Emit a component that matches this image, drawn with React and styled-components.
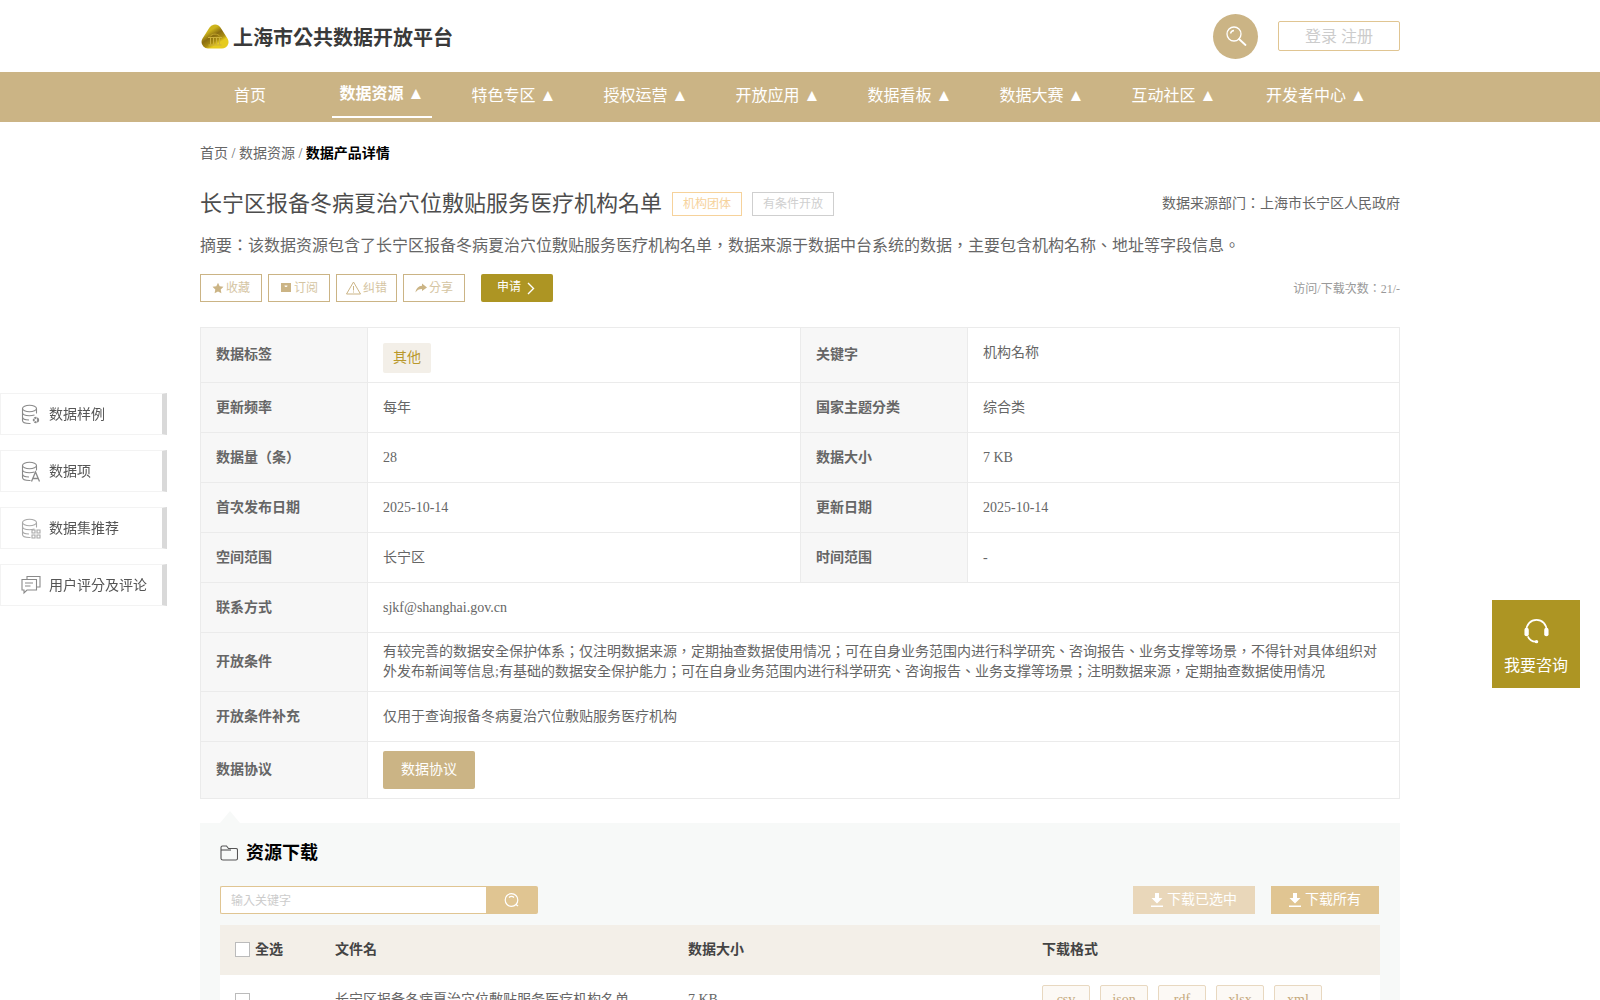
import React from 'react';
import styled, { createGlobalStyle } from 'styled-components';

const GlobalStyle = createGlobalStyle`
  html, body {
    margin: 0;
    padding: 0;
    background: #fff;
    overflow-x: hidden;
  }
  body {
    font-family: "Liberation Serif", "Noto Sans CJK TC", serif;
    font-size: 14px;
    line-height: 1.42857;
    color: #666;
  }
  * {
    box-sizing: border-box;
  }
`;

const NAV_ITEMS = [
  { label: '首页' },
  { label: '数据资源', arrow: true, active: true },
  { label: '特色专区', arrow: true },
  { label: '授权运营', arrow: true },
  { label: '开放应用', arrow: true },
  { label: '数据看板', arrow: true },
  { label: '数据大赛', arrow: true },
  { label: '互动社区', arrow: true },
  { label: '开发者中心', arrow: true },
];

const FORMATS = ['csv', 'json', 'rdf', 'xlsx', 'xml'];

const Logo = () => (
  <svg width="30" height="28" viewBox="0 0 30 28">
    <defs>
      <linearGradient id="gold" x1="0.1" y1="0" x2="0.9" y2="1">
        <stop offset="0" stopColor="#cdb41c" />
        <stop offset="0.4" stopColor="#8a6d10" />
        <stop offset="0.75" stopColor="#a98c12" />
        <stop offset="1" stopColor="#e6cb1e" />
      </linearGradient>
    </defs>
    <path d="M15 9L22 20H8z" fill="url(#gold)" stroke="url(#gold)" strokeWidth="13" strokeLinejoin="round" />
    <path d="M8 15.500h14M8.500 23h13M10.500 16v6.500M13.500 16v6.500M16.500 16v6.500M19.500 16v6.500" stroke="#cdb13c" strokeWidth="1" fill="none" />
    <path d="M10 14.500c2-3.200 8-3.200 10 0" stroke="#c4a62c" strokeWidth="1" fill="none" />
  </svg>
);

const SearchGlyph = () => (
  <svg width="22" height="22" viewBox="0 0 22 22" fill="none" stroke="#fff" strokeWidth="1.300">
    <circle cx="9" cy="9" r="7" />
    <path d="M5.500 8.500a4 4 0 0 1 3.500-3" />
    <path d="M14 14l6.500 6" strokeWidth="1.800" strokeLinecap="round" />
  </svg>
);

const SearchRound = () => (
  <svg width="16" height="16" viewBox="0 0 16 16" fill="none" stroke="#fff" strokeWidth="1.200">
    <circle cx="7.500" cy="8" r="6.300" />
    <path d="M5 5.500a3.500 3.500 0 0 1 5 0" />
    <path d="M12 12.500l2 1.500" strokeWidth="1.400" />
  </svg>
);

const Star = () => (
  <svg width="12" height="12" viewBox="0 0 24 24" fill="#cbb485">
    <path d="M12 1.500l3.300 7 7.700 1-5.600 5.300 1.400 7.700-6.800-3.700-6.800 3.700 1.400-7.700L1 9.500l7.700-1z" />
  </svg>
);

const Subscribe = () => (
  <svg width="12" height="12" viewBox="0 0 12 12">
    <path fill="#cbb485" d="M1 1h10v9H1zM4.500 3.500a1.500 1.500 0 0 0 3 0z" fillRule="evenodd" />
  </svg>
);

const Warning = () => (
  <svg width="15" height="14" viewBox="0 0 15 14" fill="none" stroke="#cbb485">
    <path d="M7.500 1L14.500 13H.5z" />
    <path d="M7.500 5v4.500M7.500 10.500v1" />
  </svg>
);

const Share = () => (
  <svg width="12" height="12" viewBox="0 0 12 12">
    <path fill="#cbb485" d="M7 1.500L12 5.500 7 9V7C4 7 2 8 .5 10.500 1 6.500 3.500 4 7 3.800z" />
  </svg>
);

const Chevron = () => (
  <svg width="9" height="13" viewBox="0 0 9 13" fill="none" stroke="#fff" strokeWidth="1.400">
    <path d="M2 1l5.500 5.500L2 12" />
  </svg>
);

const DbBody = () => (
  <>
    <ellipse cx="8.500" cy="4.500" rx="7" ry="3.200" />
    <path d="M1.500 4.500v12c0 1.800 3 3 7 3h1" />
    <path d="M15.500 4.500v5" />
    <path d="M1.500 8.500c0 1.800 3 3.200 7 3.200 2 0 3.500-.3 5-.8M1.500 13c0 1.800 3 3 6.500 3" />
  </>
);

const DbGear = () => (
  <svg width="20" height="21" viewBox="0 0 20 21" fill="none" stroke="#8a8a8a" strokeWidth="1.100">
    <DbBody />
    <circle cx="15" cy="16" r="2.200" strokeWidth="2" strokeDasharray="2 .6" />
  </svg>
);

const DbLetter = () => (
  <svg width="20" height="21" viewBox="0 0 20 21" fill="none" stroke="#8a8a8a" strokeWidth="1.100">
    <DbBody />
    <path d="M10.500 20.500L14.500 11l4 9.500M12 17.500h5" strokeWidth="1.300" />
  </svg>
);

const DbGrid = () => (
  <svg width="20" height="21" viewBox="0 0 20 21" fill="none" stroke="#a8a8a8" strokeWidth="1.100">
    <DbBody />
    <path d="M11 12h3v3h-3zM16 12h3v3h-3zM11 17h3v3h-3zM16 17h3v3h-3z" />
  </svg>
);

const Comment = () => (
  <svg width="20" height="20" viewBox="0 0 20 20" fill="none" stroke="#8a8a8a" strokeWidth="1.100">
    <path d="M6 4V1.500h13V12h-3" />
    <path d="M1 4.500h14.500v10.500H6l-3 3v-3H1z" />
    <path d="M4 8h8M4 11h5.500" />
  </svg>
);

const Folder = () => (
  <svg width="18" height="16" viewBox="0 0 18 16" fill="none" stroke="#555" strokeWidth="1.100">
    <path d="M1 13.500V2.500C1 1.500 1.500 1 2.500 1h4l2 2.500h7.500c1 0 1.500.5 1.500 1.500v8.500c0 1-.5 1.500-1.500 1.500h-13C1.500 15 1 14.500 1 13.500z" />
    <path d="M1 5h10" />
  </svg>
);

const DownloadGlyph = () => (
  <svg width="12" height="14" viewBox="0 0 12 14" fill="#fff">
    <path d="M4 0h4v5h3.500L6 10.500.5 5H4z" />
    <path d="M0 12.500h12V14H0z" />
  </svg>
);

const Headset = () => (
  <svg width="27" height="27" viewBox="0 0 28 28" fill="none" stroke="#fff" strokeWidth="1.800">
    <path d="M3.500 13C3.500 6.500 8 2 14 2s10.500 4.500 10.500 11" />
    <path d="M5 19c1.500 3.500 4.500 5.500 8 5.500" />
    <rect x="1.500" y="10" width="4.500" height="9" rx="2.200" fill="#fff" stroke="none" />
    <rect x="22" y="10" width="4.500" height="9" rx="2.200" fill="#fff" stroke="none" />
    <circle cx="14" cy="24.500" r="1.800" fill="#fff" stroke="none" />
  </svg>
);

const SIDE_ITEMS = [
  { label: '数据样例', icon: <DbGear /> },
  { label: '数据项', icon: <DbLetter /> },
  { label: '数据集推荐', icon: <DbGrid /> },
  { label: '用户评分及评论', icon: <Comment /> },
];

const ACTIONS = [
  { label: '收藏', icon: <Star />, width: 62 },
  { label: '订阅', icon: <Subscribe />, width: 62 },
  { label: '纠错', icon: <Warning />, width: 61 },
  { label: '分享', icon: <Share />, width: 62 },
];

export default function App() {
  return (
    <Page>
      <GlobalStyle />
      <Header>
        <HeaderInner>
          <Brand>
            <Logo />
            <BrandName>上海市公共数据开放平台</BrandName>
          </Brand>
          <HeaderRight>
            <SearchCircle>
              <SearchGlyph />
            </SearchCircle>
            <LoginBox>登录 注册</LoginBox>
          </HeaderRight>
        </HeaderInner>
      </Header>

      <NavBar>
        <NavInner>
          {NAV_ITEMS.map(item => (
            <NavItem key={item.label} $active={item.active}>
              {item.label}
              {item.arrow && ' '}
              {item.arrow && <NavArrow>▲</NavArrow>}
            </NavItem>
          ))}
        </NavInner>
      </NavBar>

      <SideMenu>
        {SIDE_ITEMS.map(item => (
          <SideItem key={item.label}>
            <SideIcon>{item.icon}</SideIcon>
            {item.label}
          </SideItem>
        ))}
      </SideMenu>

      <Consult>
        <Headset />
        <span>我要咨询</span>
      </Consult>

      <Main>
        <Breadcrumb>
          首页 / 数据资源 / <b>数据产品详情</b>
        </Breadcrumb>

        <TitleRow>
          <Title>长宁区报备冬病夏治穴位敷贴服务医疗机构名单</Title>
          <Badge $color="#f6d29b">机构团体</Badge>
          <Badge $color="#cfcfcf">有条件开放</Badge>
          <Source>数据来源部门：上海市长宁区人民政府</Source>
        </TitleRow>

        <Summary>
          摘要：该数据资源包含了长宁区报备冬病夏治穴位敷贴服务医疗机构名单，数据来源于数据中台系统的数据，主要包含机构名称、地址等字段信息。
        </Summary>

        <ActionRow>
          {ACTIONS.map(action => (
            <ActionButton key={action.label} $width={action.width}>
              {action.icon}
              {action.label}
            </ActionButton>
          ))}
          <ApplyButton>
            申请 <Chevron />
          </ApplyButton>
          <Visits>访问/下载次数：21/-</Visits>
        </ActionRow>

        <InfoTable>
          <colgroup>
            <col width="167" />
            <col width="433" />
            <col width="167" />
            <col />
          </colgroup>
          <tbody>
            <InfoRow $h={55}>
              <Label>数据标签</Label>
              <Value>
                <CategoryTag>其他</CategoryTag>
              </Value>
              <Label>关键字</Label>
              <Value $raised>机构名称</Value>
            </InfoRow>
            <InfoRow>
              <Label>更新频率</Label>
              <Value>每年</Value>
              <Label>国家主题分类</Label>
              <Value>综合类</Value>
            </InfoRow>
            <InfoRow>
              <Label>数据量（条）</Label>
              <Value>28</Value>
              <Label>数据大小</Label>
              <Value>7 KB</Value>
            </InfoRow>
            <InfoRow>
              <Label>首次发布日期</Label>
              <Value>2025-10-14</Value>
              <Label>更新日期</Label>
              <Value>2025-10-14</Value>
            </InfoRow>
            <InfoRow>
              <Label>空间范围</Label>
              <Value>长宁区</Value>
              <Label>时间范围</Label>
              <Value>-</Value>
            </InfoRow>
            <InfoRow>
              <Label>联系方式</Label>
              <Value colSpan={3}>sjkf@shanghai.gov.cn</Value>
            </InfoRow>
            <InfoRow $h={59}>
              <Label>开放条件</Label>
              <Value colSpan={3}>
                有较完善的数据安全保护体系；仅注明数据来源，定期抽查数据使用情况；可在自身业务范围内进行科学研究、咨询报告、业务支撑等场景，不得针对具体组织对外发布新闻等信息;有基础的数据安全保护能力；可在自身业务范围内进行科学研究、咨询报告、业务支撑等场景；注明数据来源，定期抽查数据使用情况
              </Value>
            </InfoRow>
            <InfoRow>
              <Label>开放条件补充</Label>
              <Value colSpan={3}>仅用于查询报备冬病夏治穴位敷贴服务医疗机构</Value>
            </InfoRow>
            <InfoRow $h={57}>
              <Label>数据协议</Label>
              <Value colSpan={3}>
                <AgreementButton>数据协议</AgreementButton>
              </Value>
            </InfoRow>
          </tbody>
        </InfoTable>

        <DownloadSection>
          <SectionTitle>
            <Folder />
            资源下载
          </SectionTitle>
          <Toolbar>
            <SearchGroup>
              <SearchInput placeholder="输入关键字" />
              <SearchButton>
                <SearchRound />
              </SearchButton>
            </SearchGroup>
            <DownloadGroup>
              <DownloadButton $muted>
                <DownloadGlyph />
                下载已选中
              </DownloadButton>
              <DownloadButton>
                <DownloadGlyph />
                下载所有
              </DownloadButton>
            </DownloadGroup>
          </Toolbar>
          <FileHead>
            <CheckCell>
              <CheckBox />
              全选
            </CheckCell>
            <div>文件名</div>
            <div>数据大小</div>
            <div>下载格式</div>
          </FileHead>
          <FileRow>
            <CheckCell $inRow>
              <CheckBox />
            </CheckCell>
            <FileText>长宁区报备冬病夏治穴位敷贴服务医疗机构名单</FileText>
            <FileText>7 KB</FileText>
            <Formats>
              {FORMATS.map(format => (
                <FormatTag key={format}>{format}</FormatTag>
              ))}
            </Formats>
          </FileRow>
        </DownloadSection>
      </Main>
    </Page>
  );
}

const Page = styled.div`
  height: 1000px;
  overflow: hidden;
`;

const Header = styled.header`
  height: 72px;
  background: #fff;
`;

const HeaderInner = styled.div`
  width: 1200px;
  height: 100%;
  margin: 0 auto;
  display: flex;
  align-items: center;
  justify-content: space-between;
`;

const Brand = styled.div`
  display: flex;
  align-items: center;
  gap: 3px;
`;

const BrandName = styled.div`
  padding-top: 4px;
  font-size: 20px;
  font-weight: 700;
  color: #3a3a3a;
`;

const HeaderRight = styled.div`
  display: flex;
  align-items: center;
  gap: 20px;
`;

const SearchCircle = styled.div`
  width: 45px;
  height: 45px;
  border-radius: 50%;
  background: #cbb485;
  display: flex;
  align-items: center;
  justify-content: center;
`;

const LoginBox = styled.div`
  width: 122px;
  height: 30px;
  border: 1px solid #e0c592;
  border-radius: 2px;
  color: #ccc;
  font-size: 16px;
  line-height: 29px;
  text-align: center;
`;

const NavBar = styled.nav`
  height: 50px;
  background: #cbb485;
`;

const NavInner = styled.div`
  width: 1200px;
  height: 100%;
  margin: 0 auto;
  display: flex;
  gap: 32px;
`;

const NavItem = styled.div`
  min-width: 100px;
  padding: 0 6px;
  height: 46px;
  margin-bottom: 4px;
  color: #fff;
  font-size: 16px;
  line-height: ${props => (props.$active ? '43px' : '47px')};
  text-align: center;
  white-space: nowrap;
  font-weight: ${props => (props.$active ? 700 : 400)};
  border-bottom: ${props => (props.$active ? '2px solid #fff' : 'none')};

  &:last-child {
    padding-left: 10px;
  }
`;

const NavArrow = styled.span`
  font-size: 17px;
  font-weight: 400;
`;

const SideMenu = styled.aside`
  position: fixed;
  left: 0;
  top: 393px;
  display: flex;
  flex-direction: column;
  gap: 15px;
`;

const SideItem = styled.div`
  width: 167px;
  height: 42px;
  padding: 2px 0 0 20px;
  display: flex;
  align-items: center;
  gap: 8px;
  background: #fff;
  border: 1px solid #f3f3f3;
  border-right: 5px solid #d9d9d9;
  font-size: 14px;
  color: #555;
`;

const SideIcon = styled.span`
  display: flex;
  width: 20px;
  margin-top: -2px;
`;

const Consult = styled.div`
  position: fixed;
  left: 1492px;
  top: 600px;
  width: 88px;
  height: 88px;
  padding-top: 18px;
  background: #ad9523;
  color: #fff;
  font-size: 16px;
  display: flex;
  flex-direction: column;
  align-items: center;
  gap: 10px;
`;

const Main = styled.main`
  width: 1200px;
  margin: 0 auto;
`;

const Breadcrumb = styled.div`
  margin-top: 22px;
  height: 20px;
  line-height: 20px;
  font-size: 14px;
  color: #666;

  b {
    color: #000;
  }
`;

const TitleRow = styled.div`
  margin-top: 24px;
  height: 30px;
  display: flex;
  align-items: center;
  gap: 10px;
`;

const Title = styled.h1`
  margin: 0;
  padding-top: 2px;
  font-size: 22px;
  font-weight: 400;
  color: #4d4d4d;
`;

const Badge = styled.span`
  height: 24px;
  margin-top: 2px;
  line-height: 22px;
  padding: 0 10px;
  border: 1px solid ${props => props.$color};
  color: ${props => props.$color};
  font-size: 12px;
`;

const Source = styled.span`
  margin-left: auto;
  padding-top: 2px;
  font-size: 14px;
  color: #666;
`;

const Summary = styled.p`
  margin: 16px 0 0;
  font-size: 16px;
  line-height: 24px;
  color: #666;
`;

const ActionRow = styled.div`
  margin-top: 16px;
  height: 28px;
  display: flex;
  align-items: center;
  gap: 6px;
`;

const ActionButton = styled.button`
  width: ${props => props.$width}px;
  height: 28px;
  padding: 2px 0 0;
  display: flex;
  align-items: center;
  justify-content: center;
  gap: 2px;
  background: #fff;
  border: 1px solid #cbb485;
  border-radius: 0;
  font: inherit;
  font-size: 12px;
  color: #d5c5a3;

  svg {
    margin-top: -3px;
  }
`;

const ApplyButton = styled.button`
  width: 72px;
  height: 28px;
  margin-left: 10px;
  padding: 0 0 0 16px;
  display: flex;
  align-items: center;
  gap: 5px;
  background: #ad9523;
  border: none;
  border-radius: 2px;
  font: inherit;
  font-size: 12px;
  color: #fff;
`;

const Visits = styled.span`
  margin-left: auto;
  padding-top: 3px;
  font-size: 12px;
  color: #999;
`;

const InfoTable = styled.table`
  width: 100%;
  margin-top: 25px;
  border-collapse: collapse;
  table-layout: fixed;
  border: 1px solid #ebebeb;
`;

const InfoRow = styled.tr`
  height: ${props => props.$h || 50}px;
`;

const Label = styled.th`
  padding: 0 15px;
  border: 1px solid #ebebeb;
  background: #f7f7f7;
  color: #666;
  font-size: 14px;
  font-weight: 700;
  text-align: left;
`;

const Value = styled.td`
  padding: ${props => (props.$raised ? '0 15px 5px' : '0 15px')};
  border: 1px solid #ebebeb;
  color: #666;
  font-size: 14px;
  line-height: 20px;
`;

const CategoryTag = styled.span`
  display: inline-block;
  height: 30px;
  margin-top: 6px;
  padding: 0 10px;
  line-height: 30px;
  border-radius: 2px;
  background: #f3efe8;
  color: #b9982c;
  vertical-align: middle;
`;

const AgreementButton = styled.button`
  display: block;
  width: 92px;
  height: 38px;
  border: none;
  border-radius: 2px;
  background: #cbb485;
  color: #fff;
  font: inherit;
  font-size: 14px;
`;

const DownloadSection = styled.section`
  position: relative;
  margin-top: 24px;
  padding: 15px 20px 20px;
  background: #f7f9f8;

  &::before {
    content: '';
    position: absolute;
    left: 20px;
    top: -12px;
    border-left: 10px solid transparent;
    border-right: 10px solid transparent;
    border-bottom: 12px solid #f7f9f8;
  }
`;

const SectionTitle = styled.h2`
  margin: 0;
  height: 30px;
  padding-top: 2px;
  display: flex;
  align-items: center;
  gap: 8px;
  font-size: 18px;
  font-weight: 700;
  color: #000;

  svg {
    margin-top: -3px;
  }
`;

const Toolbar = styled.div`
  margin-top: 18px;
  display: flex;
  justify-content: space-between;
`;

const SearchGroup = styled.div`
  display: flex;
`;

const SearchInput = styled.input`
  width: 266px;
  height: 28px;
  padding: 2px 10px 0;
  border: 1px solid #e0c592;
  border-right: none;
  border-radius: 2px 0 0 2px;
  outline: none;
  font: inherit;
  font-size: 12px;

  &::placeholder {
    color: #ccc;
  }
`;

const SearchButton = styled.button`
  width: 52px;
  height: 28px;
  display: flex;
  align-items: center;
  justify-content: center;
  border: none;
  border-radius: 0 2px 2px 0;
  background: #e0c592;
`;

const DownloadGroup = styled.div`
  display: flex;
  gap: 16px;
  margin-right: 1px;
`;

const DownloadButton = styled.button`
  height: 28px;
  width: ${props => (props.$muted ? '122px' : '108px')};
  display: flex;
  align-items: center;
  justify-content: center;
  gap: 4px;
  padding: 0;
  border: none;
  background: ${props => (props.$muted ? '#e9d7ba' : '#e0c592')};
  color: #fff;
  font: inherit;
  font-size: 14px;
`;

const FileHead = styled.div`
  margin-top: 11px;
  height: 50px;
  display: grid;
  grid-template-columns: 115px 353px 354px 1fr;
  align-items: center;
  background: #f3efe8;
  font-weight: 700;
  font-size: 14px;
  color: #444;
`;

const FileRow = styled.div`
  min-height: 60px;
  display: grid;
  grid-template-columns: 115px 353px 354px 1fr;
  align-items: start;
  background: #fff;
  font-size: 14px;
  color: #666;
`;

const CheckCell = styled.div`
  padding: ${props => (props.$inRow ? '18px 0 0 15px' : '0 0 0 15px')};
  display: flex;
  align-items: center;
  gap: 5px;
`;

const CheckBox = styled.span`
  width: 15px;
  height: 15px;
  border: 1px solid #bbb;
  background: #fff;
`;

const FileText = styled.div`
  padding-top: 15px;
`;

const Formats = styled.div`
  margin-top: 10px;
  display: flex;
  gap: 10px;
`;

const FormatTag = styled.span`
  width: 48px;
  height: 30px;
  line-height: 28px;
  text-align: center;
  border: 1px solid #e8d8c0;
  border-radius: 2px;
  background: #fcf9f5;
  color: #c4a87c;
  font-size: 14px;
`;
